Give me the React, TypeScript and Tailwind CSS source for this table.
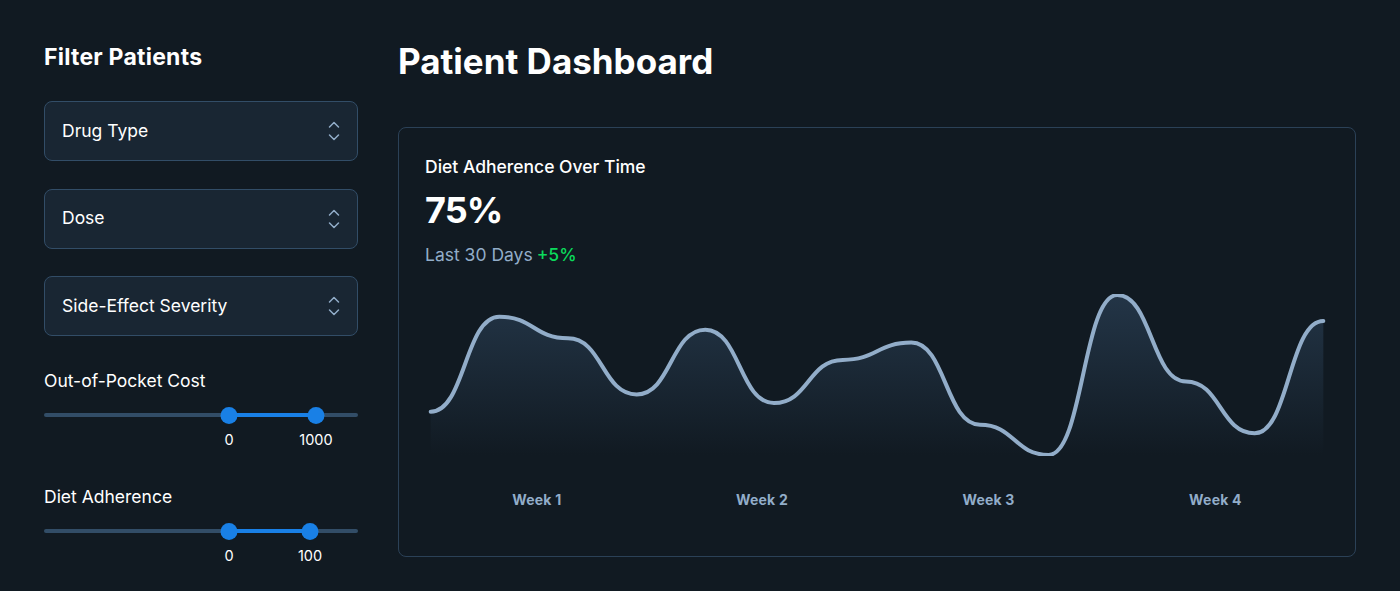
import React from 'react'

const FONT = { fontFamily: 'Inter, "Noto Sans", sans-serif' }

const LINE =
  'M0 109C18.1538 109 18.1538 21 36.3077 21C54.4615 21 54.4615 41 72.6154 41C90.7692 41 90.7692 93 108.923 93C127.077 93 127.077 33 145.231 33C163.385 33 163.385 101 181.538 101C199.692 101 199.692 61 217.846 61C236 61 236 45 254.154 45C272.308 45 272.308 121 290.462 121C308.615 121 308.615 149 326.769 149C344.923 149 344.923 1 363.077 1C381.231 1 381.231 81 399.385 81C417.538 81 417.538 129 435.692 129C453.846 129 453.846 25 472 25'

function UpDown() {
  return (
    <svg width="14" height="22" viewBox="0 0 14 22" fill="none" className="shrink-0">
      <path d="M2.5 7 L7 2.5 L11.5 7" stroke="#92adc9" strokeWidth="1.5" strokeLinecap="round" strokeLinejoin="round" />
      <path d="M2.5 15 L7 19.5 L11.5 15" stroke="#92adc9" strokeWidth="1.5" strokeLinecap="round" strokeLinejoin="round" />
    </svg>
  )
}

function SelectBox({ label }: { label: string }) {
  return (
    <div className="flex h-[60px] items-center justify-between rounded-lg border border-[#324d67] bg-[#192633] pl-[17px] pr-[16px]">
      <span className="text-[17.5px] text-white">{label}</span>
      <UpDown />
    </div>
  )
}

function RangeSlider({ from, to, min, max }: { from: number; to: number; min: string; max: string }) {
  return (
    <div className="relative h-[45px] w-full">
      <div className="absolute left-0 right-0 top-[8px] h-[4px] rounded-full bg-[#324d67]" />
      <div
        className="absolute top-[8px] h-[4px] bg-[#1980e6]"
        style={{ left: from, width: to - from }}
      />
      <div className="absolute top-[2px] h-[17px] w-[17px] -translate-x-1/2 rounded-full bg-[#1980e6]" style={{ left: from }} />
      <div className="absolute top-[2px] h-[17px] w-[17px] -translate-x-1/2 rounded-full bg-[#1980e6]" style={{ left: to }} />
      <span className="absolute top-[25px] -translate-x-1/2 text-[14.5px] leading-5 text-white" style={{ left: from }}>
        {min}
      </span>
      <span className="absolute top-[25px] -translate-x-1/2 text-[14.5px] leading-5 text-white" style={{ left: to }}>
        {max}
      </span>
    </div>
  )
}

export default function App() {
  return (
    <div className="flex min-h-[591px] w-full gap-[40px] bg-[#111a22] px-[44px]" style={FONT}>
      {/* Filters */}
      <aside className="flex w-[314px] shrink-0 flex-col pt-[43px]">
        <h2 className="text-[23px] font-bold leading-[28px] tracking-[0.01em] text-white">Filter Patients</h2>
        <div className="mt-[30px] flex flex-col gap-[27.5px]">
          <SelectBox label="Drug Type" />
          <SelectBox label="Dose" />
          <SelectBox label="Side-Effect Severity" />
        </div>
        <p className="mt-[33px] text-[17.5px] leading-6 text-white">Out-of-Pocket Cost</p>
        <div className="mt-[12px]">
          <RangeSlider from={185} to={272} min="0" max="1000" />
        </div>
        <p className="mt-[35px] text-[17.5px] leading-6 text-white">Diet Adherence</p>
        <div className="mt-[12px]">
          <RangeSlider from={185} to={266} min="0" max="100" />
        </div>
      </aside>

      {/* Dashboard */}
      <main className="flex flex-1 flex-col pt-[41px]">
        <h1 className="text-[35px] font-bold leading-[40px] text-white">Patient Dashboard</h1>
        <section className="mt-[46px] flex h-[430px] flex-col rounded-lg border border-[#2b4157] px-[26px] pt-[26px]">
          <p className="text-[17.5px] font-medium leading-[26px] text-white">Diet Adherence Over Time</p>
          <p className="mt-[8px] text-[36px] font-bold leading-[44px] tracking-tight text-white">75%</p>
          <div className="mt-[10px] flex gap-1 text-[17.5px] leading-[26px]">
            <span className="text-[#92adc9]">Last 30 Days</span>
            <span className="font-medium text-[#0bda5b]">+5%</span>
          </div>
          <div className="mt-[26px] flex flex-col gap-[34px]">
            <svg width="100%" height="162" viewBox="-3 0 478 150" fill="none" preserveAspectRatio="none">
              <defs>
                <linearGradient id="adh" x1="236" y1="1" x2="236" y2="149" gradientUnits="userSpaceOnUse">
                  <stop stopColor="#233547" />
                  <stop offset="1" stopColor="#233547" stopOpacity="0" />
                </linearGradient>
              </defs>
              <path d={LINE + 'V149H326.769H0V109Z'} fill="url(#adh)" />
              <path
                d={LINE}
                stroke="#92adc9"
                strokeWidth="4"
                strokeLinecap="round"
                vectorEffect="non-scaling-stroke"
              />
            </svg>
            <div className="flex justify-around">
              {['Week 1', 'Week 2', 'Week 3', 'Week 4'].map((w) => (
                <span key={w} className="text-[14px] font-bold leading-5 tracking-[0.015em] text-[#92adc9]">
                  {w}
                </span>
              ))}
            </div>
          </div>
        </section>
      </main>
    </div>
  )
}
